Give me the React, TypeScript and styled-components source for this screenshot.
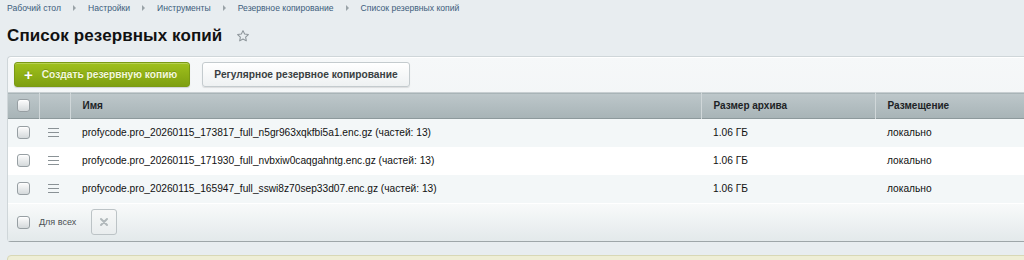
import React from "react";
import styled, { createGlobalStyle } from "styled-components";

const Global = createGlobalStyle`
  html, body { margin: 0; padding: 0; }
  body {
    background: #e8edf0;
    font-family: "Liberation Sans", Arial, sans-serif;
    overflow: hidden;
    width: 1024px;
    height: 260px;
  }
`;

const Page = styled.div`
  width: 1060px;
  padding: 0 0 0 7px;
  box-sizing: border-box;
`;

const Crumbs = styled.nav`
  display: flex;
  align-items: center;
  height: 14px;
  padding-top: 1px;
  font-size: 8.6px;
  color: #3d5d7c;
`;

const Crumb = styled.span`
  white-space: nowrap;
  flex: none;
`;

const Sep = styled.span`
  flex: 0 0 27px;
  width: 27px;
  height: 6px;
  position: relative;
  &::before {
    content: "";
    position: absolute;
    left: 12px;
    top: 0;
    width: 0;
    height: 0;
    border-left: 3px solid #9aa3a8;
    border-top: 3px solid transparent;
    border-bottom: 3px solid transparent;
  }
`;

const TitleRow = styled.div`
  display: flex;
  align-items: center;
  height: 41px;
  gap: 14px;
`;

const Title = styled.h1`
  margin: 0;
  font-size: 17px;
  font-weight: bold;
  color: #111;
  letter-spacing: 0.1px;
`;

const Panel = styled.div`
  border: 1px solid #cfd6d9;
  border-bottom: 1px solid #9ea6a9;
  border-right: none;
  border-radius: 4px 0 0 4px;
  background: linear-gradient(#f6f8f9, #e9eef0);
  box-shadow: inset 0 1px 0 #fff;
`;

const Toolbar = styled.div`
  display: flex;
  gap: 12px;
  padding: 5px 0 5px 6px;
`;

const Button = styled.button<{ $primary?: boolean }>`
  height: 25px;
  box-sizing: border-box;
  display: flex;
  align-items: center;
  white-space: nowrap;
  gap: 9px;
  font-family: inherit;
  font-size: 10.2px;
  font-weight: bold;
  border-radius: 3px;
  cursor: pointer;
  ${(p) =>
    p.$primary
      ? `
    width: 176px;
    padding: 0 0 0 9px;
    color: #f3f8dc;
    background: linear-gradient(#a0c11d, #7e9f10);
    border: 1px solid #7a9a14;
    box-shadow: 0 1px 1px rgba(0,0,0,0.15), inset 0 1px 0 rgba(255,255,255,0.25);
    text-shadow: 0 -1px 0 rgba(60,80,0,0.3);
  `
      : `
    width: 208px;
    padding: 0;
    justify-content: center;
    color: #3a3f42;
    background: linear-gradient(#ffffff, #eef1f2);
    border: 1px solid #c4cbce;
    box-shadow: 0 1px 1px rgba(0,0,0,0.1);
  `}
`;

const Plus = styled.span`
  font-size: 15px;
  line-height: 1;
  font-weight: bold;
  color: #fff;
`;

const Table = styled.table`
  width: 100%;
  border-collapse: collapse;
  table-layout: fixed;
`;

const HeadRow = styled.tr`
  height: 26px;
  background: linear-gradient(#bdc7ca, #a8b4b7);
  border-top: 1px solid #c7ced1;
  border-bottom: 1px solid #8d999c;
`;

const Th = styled.th<{ $pad?: number }>`
  text-align: left;
  font-size: 10px;
  font-weight: bold;
  color: #1d2326;
  padding: 0 0 0 ${(p) => p.$pad ?? 12}px;
  border-left: 1px solid #d0d7d9;
  &:first-child { border-left: none; }
`;

const Row = styled.tr<{ $alt?: boolean }>`
  height: 28px;
  background: ${(p) => (p.$alt ? "#ffffff" : "#f3f7f8")};
`;

const Td = styled.td<{ $pad?: number }>`
  font-size: 10.2px;
  color: #111;
  padding: 0 0 0 ${(p) => p.$pad ?? 12}px;
  white-space: nowrap;
`;

const Check = styled.span`
  display: block;
  width: 11px;
  height: 11px;
  margin-left: 9px;
  border: 1px solid #979fa3;
  border-radius: 3px;
  background: linear-gradient(#fdfdfd, #d4d9db);
  box-shadow: inset 0 1px 1px rgba(255,255,255,0.8);
`;

const Menu = styled.span`
  display: block;
  width: 11px;
  height: 7px;
  margin-left: 9px;
  border-top: 1px solid #8a9296;
  border-bottom: 1px solid #8a9296;
  position: relative;
  &::after {
    content: "";
    position: absolute;
    left: 0;
    right: 0;
    top: 3px;
    border-top: 1px solid #8a9296;
  }
`;

const Footer = styled.div`
  display: flex;
  align-items: center;
  height: 37px;
  background: linear-gradient(#f8fafa, #e3e9eb);
  border-top: 1px solid #fff;
`;

const AllLabel = styled.span`
  font-size: 9px;
  color: #4a5053;
  margin-left: 9px;
  margin-right: 15px;
`;

const IconButton = styled.button`
  width: 26px;
  height: 26px;
  box-sizing: border-box;
  border: 1px solid #bcc3c6;
  border-radius: 3px;
  background: linear-gradient(#f7f8f8, #e9edee);
  display: flex;
  align-items: center;
  justify-content: center;
  padding: 0;
`;

const Notice = styled.div`
  margin-top: 13px;
  height: 20px;
  border: 1px solid #d8d8b6;
  border-radius: 4px 0 0 0;
  background: #eeeed6;
`;

const Star = () => (
  <svg width="14" height="14" viewBox="0 0 24 24" fill="none" stroke="#8c9499" strokeWidth="1.8" strokeLinejoin="round">
    <path d="M12 2.8l2.8 5.9 6.4.8-4.7 4.4 1.2 6.4L12 17.2l-5.7 3.1 1.2-6.4-4.7-4.4 6.4-.8z" />
  </svg>
);

const XIcon = () => (
  <svg width="10" height="10" viewBox="0 0 10 10" stroke="#b1b8bb" strokeWidth="2" strokeLinecap="round">
    <path d="M2 2l6 6M8 2l-6 6" />
  </svg>
);

const rows = [
  "profycode.pro_20260115_173817_full_n5gr963xqkfbi5a1.enc.gz (частей: 13)",
  "profycode.pro_20260115_171930_full_nvbxiw0caqgahntg.enc.gz (частей: 13)",
  "profycode.pro_20260115_165947_full_sswi8z70sep33d07.enc.gz (частей: 13)",
];

const crumbs = ["Рабочий стол", "Настройки", "Инструменты", "Резервное копирование", "Список резервных копий"];

export default function App() {
  return (
    <>
      <Global />
      <Page>
        <Crumbs>
          {crumbs.map((c, i) => (
            <React.Fragment key={c}>
              {i > 0 && <Sep />}
              <Crumb>{c}</Crumb>
            </React.Fragment>
          ))}
        </Crumbs>
        <TitleRow>
          <Title>Список резервных копий</Title>
          <Star />
        </TitleRow>
        <Panel>
          <Toolbar>
            <Button $primary>
              <Plus>+</Plus>
              Создать резервную копию
            </Button>
            <Button>Регулярное резервное копирование</Button>
          </Toolbar>
          <Table>
            <colgroup>
              <col style={{ width: 31 }} />
              <col style={{ width: 31 }} />
              <col style={{ width: 631 }} />
              <col style={{ width: 174 }} />
              <col />
            </colgroup>
            <thead>
              <HeadRow>
                <Th $pad={0}><Check /></Th>
                <Th $pad={0} />
                <Th>Имя</Th>
                <Th>Размер архива</Th>
                <Th>Размещение</Th>
              </HeadRow>
            </thead>
            <tbody>
              {rows.map((r, i) => (
                <Row key={r} $alt={i % 2 === 1}>
                  <Td $pad={0}><Check /></Td>
                  <Td $pad={0}><Menu /></Td>
                  <Td>{r}</Td>
                  <Td>1.06 ГБ</Td>
                  <Td>локально</Td>
                </Row>
              ))}
            </tbody>
          </Table>
          <Footer>
            <Check />
            <AllLabel>Для всех</AllLabel>
            <IconButton><XIcon /></IconButton>
          </Footer>
        </Panel>
        <Notice />
      </Page>
    </>
  );
}
